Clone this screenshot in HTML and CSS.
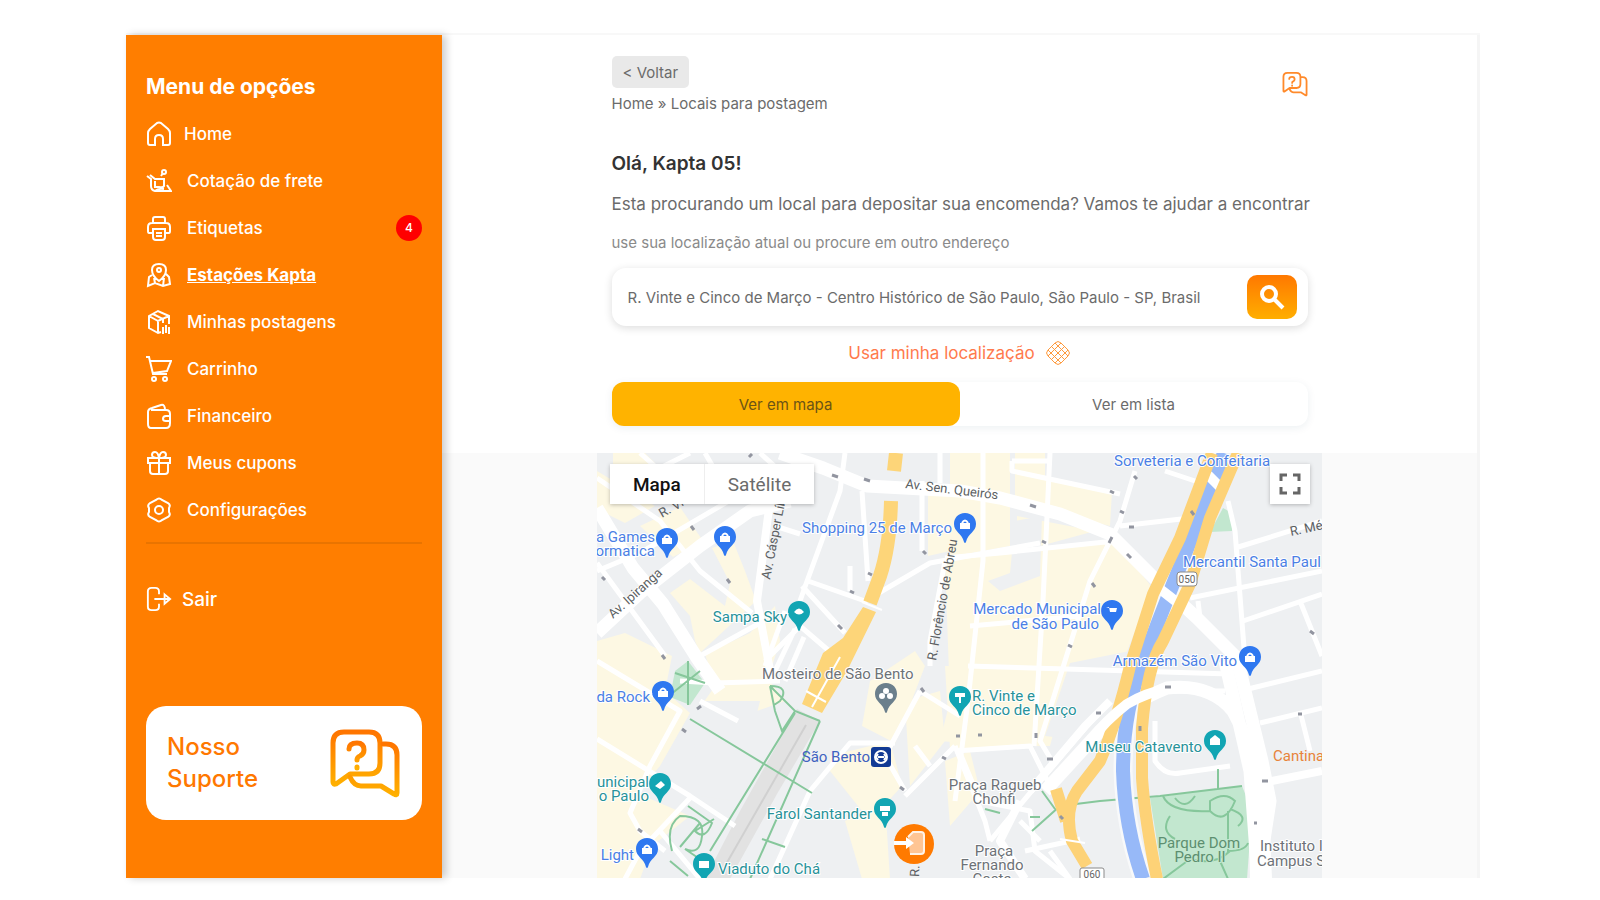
FILE: index.html
```html
<!DOCTYPE html>
<html lang="pt-BR">
<head>
    <meta charset="UTF-8">
    <meta name="viewport" content="width=device-width, initial-scale=1.0">
    <title>Kapta - Locais para postagem</title>
    <link rel="stylesheet" href="styles.css">
</head>
<body>
    <!-- shared shapes -->
    <svg class="defs" width="0" height="0" aria-hidden="true">
        <defs>
            <linearGradient id="orangeGradient" x1="0" y1="0" x2="0" y2="1">
                <stop offset="0" stop-color="#ff7500"/>
                <stop offset="1" stop-color="#ffb000"/>
            </linearGradient>
            <symbol id="support" viewBox="0 0 72 70">
                <g fill="none" stroke-width="5" stroke-linejoin="round" stroke-linecap="round">
                    <path d="M4 54V15Q4 4 15 4H40Q51 4 51 15V35Q51 46 40 46H21L7 56Q4 57 4 54Z"/>
                    <path d="M54 16H57Q68 16 68 27V65Q68 68 65 66L52 58H32Q25 58 21 49"/>
                    <path d="M20 21Q20 15 28 15Q35 15 35 22Q35 26 31 28Q28 29 28 32M28 39V40"/>
                </g>
            </symbol>
            <symbol id="pin" viewBox="0 0 24 32">
                <path d="M12 1C5 1 1 6 1 12C1 20 9 21 11 30Q12 32 13 30C15 21 23 20 23 12C23 6 19 1 12 1Z"/>
            </symbol>
        </defs>
    </svg>

    <div class="app">
        <aside class="sidebar">
            <h2>Menu de opções</h2>
            <nav class="menu">
                <a class="home" href="#">
                    <svg viewBox="0 0 26 26"><path d="M2 12Q2 10 4 8L11 2Q13 1 15 2L22 8Q24 10 24 12V22Q24 24 22 24H17V18Q17 14 13 14Q9 14 9 18V24H4Q2 24 2 22Z"/></svg>
                    Home
                </a>
                <a href="#">
                    <svg viewBox="0 0 26 26"><path d="M1 8L5 11V18Q5 22 9 23H25L21 17M4 7L9 11H18V18Q17 20 13 19H9V13M9 23Q12 20 18 21M15 8L17 5" /><circle cx="18" cy="4" r="2"/></svg>
                    Cotação de frete
                </a>
                <a href="#">
                    <svg viewBox="0 0 26 26"><path d="M7 8V4Q7 2 9 2H17Q19 2 19 4V8M7 18H3Q2 18 2 16V12Q2 8 6 8H20Q24 8 24 12V16Q24 18 23 18H19M7 14H19V22Q19 25 16 25H10Q7 25 7 22ZM10 18H16M10 21H16"/></svg>
                    Etiquetas
                    <span class="badge">4</span>
                </a>
                <a class="active" href="#">
                    <svg viewBox="0 0 26 26"><path d="M13 19Q6 14 6 8Q6 2 13 2Q20 2 20 8Q20 14 13 19ZM6 13L3 15L2 24L9 21L17 24L24 22L23 15L20 12M9 21L8 16M17 24L18 16"/><circle cx="13" cy="8" r="2"/></svg>
                    Estações Kapta
                </a>
                <a href="#">
                    <svg viewBox="0 0 26 26"><path d="M15 23L12 24L3 19V7L12 2L23 7V15M3 7L12 12L23 7M12 12V24M7 5L17 10V14M17 18V25M20 16V24M23 18V25"/></svg>
                    Minhas postagens
                </a>
                <a href="#">
                    <svg viewBox="0 0 26 26"><path d="M0 1H3L7 18H21M4 5H25L21 15L7 17"/><circle cx="8" cy="23" r="2"/><circle cx="19" cy="23" r="2"/></svg>
                    Carrinho
                </a>
                <a href="#">
                    <svg viewBox="0 0 26 26"><path d="M5 7H20Q24 7 24 11V20Q24 25 20 25H5Q2 25 2 21V9Q2 6 6 5L15 2Q19 1 19 7M24 13H20Q17 13 17 16Q17 18 20 18H24"/></svg>
                    Financeiro
                </a>
                <a href="#">
                    <svg viewBox="0 0 26 26"><path d="M2 8H24V13H2ZM4 13V21Q4 24 7 24H19Q22 24 22 21V13M13 8V24M13 8Q6 8 6 5Q6 2 9 2Q12 2 13 8Q14 2 17 2Q20 2 20 5Q20 8 13 8"/></svg>
                    Meus cupons
                </a>
                <a href="#">
                    <svg viewBox="0 0 26 26"><path d="M10 3Q13 0 16 3L22 6Q25 8 23 11V15Q25 18 22 20L16 23Q13 26 10 23L4 20Q1 18 3 15V11Q1 8 4 6Z"/><circle cx="13" cy="13" r="4"/></svg>
                    Configurações
                </a>
            </nav>
            <a class="logout" href="#">
                <svg viewBox="0 0 28 26"><path d="M14 8V5Q14 1 10 1H6Q2 1 2 5V21Q2 25 6 25H10Q14 25 14 21V18M9 13H25M20 8L26 13L20 18Z"/></svg>
                Sair
            </a>
            <a class="support-card" href="#">
                <span>Nosso<br>Suporte</span>
                <svg viewBox="0 0 72 70" stroke="url(#orangeGradient)"><use href="#support"/></svg>
            </a>
        </aside>

        <main class="main">
            <div class="content">
                <header class="top">
                    <div>
                        <button class="back" type="button">&lt; Voltar</button>
                        <p class="breadcrumb">Home » Locais para postagem</p>
                    </div>
                    <a class="help" href="#" aria-label="Suporte">
                        <svg viewBox="0 0 72 70" stroke="#ff8a2b"><use href="#support"/></svg>
                    </a>
                </header>

                <h1>Olá, Kapta 05!</h1>
                <p class="intro">Esta procurando um local para depositar sua encomenda? Vamos te ajudar a encontrar</p>
                <label class="hint" for="address">use sua localização atual ou procure em outro endereço</label>

                <form class="search">
                    <input type="text" id="address" name="address" value="R. Vinte e Cinco de Março - Centro Histórico de São Paulo, São Paulo - SP, Brasil">
                    <button type="button" aria-label="Buscar">
                        <svg viewBox="0 0 26 26"><circle cx="10" cy="10" r="7"/><path d="M15 15L24 24"/></svg>
                    </button>
                </form>

                <a class="locate" href="#">
                    Usar minha localização
                    <svg viewBox="0 0 26 26"><path d="M10 3Q13 0 16 3L23 10Q26 13 23 16L16 23Q13 26 10 23L3 16Q0 13 3 10ZM6 6L20 20M20 6L6 20M10 3L23 16M16 3L3 16M3 10L16 23M23 10L10 23"/></svg>
                </a>

                <div class="tabs">
                    <button class="selected" type="button">Ver em mapa</button>
                    <button type="button">Ver em lista</button>
                </div>
            </div>

            <section class="map-area">
                <div class="map">
                    <svg class="map-canvas" viewBox="597 452 725 426" preserveAspectRatio="xMidYMin slice">
                        <rect class="ground" x="500" y="400" width="1000" height="600"/>

                        <!-- commercial blocks -->
                        <g class="blocks">
                            <path d="M613 452H645L655 462L613 472ZM597 470L655 505L625 522L597 508Z"/>
                            <path d="M640 525L680 506L703 540L673 556Z"/>
                            <path d="M712 547L733 540L745 570L756 600L700 652L695 640L690 615L670 592L690 578L725 605L730 582Z"/>
                            <path d="M597 640L625 632L672 655L665 690L690 712L660 765L630 800L597 775Z"/>
                            <path d="M705 653L750 632L775 605L780 640L768 678L785 700L735 718L747 735L738 775L725 770L728 742L692 718L715 685Z"/>
                            <path d="M597 745L632 790L690 815L652 845L640 878H597Z"/>
                            <path d="M870 680L915 650L925 665L900 730L895 742L862 725ZM830 755L890 740L902 785L870 820L830 770ZM845 820L885 800L890 878H862Z"/>
                            <path d="M928 490L950 488V550L928 555ZM950 452H1010V545L950 556Z"/>
                            <path d="M1015 452H1045V478L1112 490L1110 525L1050 510L1015 495ZM1017 515L1095 530L1040 545L1017 545Z"/>
                            <path d="M945 560L1010 550L1115 540L1155 590L1135 630L1120 668H1070L1050 745L1000 745L940 740L950 700Z"/>
                            <path d="M945 665H1035L1028 745L950 748ZM945 760L970 750L980 790L950 825ZM905 700L940 690L945 740L910 785Z"/>
                        </g>
                        <g class="ground">
                            <path d="M1015 520L1042 515L1040 575L1000 590L988 580L1010 572ZM690 700L760 700L735 800L700 795Z"/>
                            <path d="M1070 662L1130 650L1090 740L1045 735Z"/>
                        </g>

                        <!-- parks -->
                        <g class="park">
                            <path d="M688 660L705 682L690 704L670 696L675 670Z"/>
                            <path d="M1223 507L1232 512V530L1210 531Z"/>
                            <path d="M1150 797L1242 785L1252 810L1247 878H1163Z"/>
                        </g>

                        <!-- rail yard -->
                        <path class="rail" d="M797 708L820 720L777 793L730 878H705L740 810Z"/>
                        <path class="rail-line" d="M806 724L725 865"/>

                        <!-- streets -->
                        <g class="street">
                            <path d="M597 477L660 520L700 570L752 612M640 452L658 468L690 452M597 570L640 552L780 470L760 452"/>
                            <path d="M597 562L665 655M705 452L720 478M845 452L840 490L806 583L800 600M862 490L868 580M808 580L865 600L930 562L1040 542"/>
                            <path d="M802 585L845 632M850 565V590M775 525L800 533M700 655L760 622M765 660L800 625L835 655"/>
                            <path d="M922 480V550M940 452V482M983 452V560L968 700L955 800M1050 452L1043 600L1034 745M1012 460H1050M1012 460V470L1120 493"/>
                            <path d="M1135 470L1120 520L1090 580L1065 660L1040 740L1052 760M1120 525L1190 517M1115 540L1000 552L945 557"/>
                            <path d="M1165 470L1225 490M1228 500L1235 530L1245 660M1235 547L1322 520M1190 597L1322 570M1200 617L1198 600M1243 620L1322 593M1300 600L1322 655"/>
                            <path d="M970 625L1080 615M968 665L1230 673M955 750L1030 745L1050 785M1130 690L1225 690M1240 690L1322 670M1260 722L1322 707M1300 710L1310 750"/>
                            <path d="M597 660L680 710L650 765L630 812L640 830L665 850M597 738L690 795L735 825M690 797L640 850L625 878M660 830L700 878"/>
                            <path d="M680 680L715 682L780 680M700 700L738 720M920 690L885 755L905 790M920 690L960 715M905 795L955 745M915 745L930 765"/>
                            <path d="M895 742H850L810 790L770 878M930 665V640L945 560M955 745L985 820L990 840M960 752L980 800L1030 810L1035 850L1070 878"/>
                            <path d="M1100 710L1040 780L990 840M1025 850L1080 838M1155 720V760Q1165 775 1180 772L1230 765M1050 850L1070 878M1040 840L1020 820"/>
                            <path d="M785 610L765 665M795 628L775 670M804 636L785 680"/>
                        </g>
                        <g class="avenue">
                            <path d="M597 632L640 592L700 545L750 510L790 500"/>
                            <path d="M597 507L633 567L663 603L697 657L720 690"/>
                            <path d="M780 452L823 467L867 485L960 490L1000 497L1060 513L1110 533L1157 580L1197 617L1237 657L1262 760L1270 800L1258 878"/>
                            <path d="M1045 790L1100 730Q1127 703 1167 687Q1210 682 1233 710Q1250 740 1257 790M1225 660L1250 770L1258 878"/>
                        </g>
                        <path class="junction" d="M1248 780H1268L1272 878H1250Z"/>
                        <path class="avenue-thin" d="M770 500L757 600L772 680M1262 782L1322 770M1030 790L1085 725L1110 700M1020 800L1000 840L1025 878"/>

                        <!-- park paths -->
                        <g class="trail">
                            <path d="M690 718L812 792M795 712L710 850M820 720L750 878M770 685L795 710L820 720M770 685L775 710L782 730L795 710M770 685Q790 685 780 700L774 704"/>
                            <path d="M688 660V704M675 672L705 682M670 694L700 670M762 838L785 846M672 850Q665 825 680 815Q705 815 702 835Q700 855 685 848L710 865M680 846L700 822M688 805L712 822Q705 840 695 830L714 818"/>
                            <path d="M670 860L688 875M1032 830L1060 805L1100 800L1160 795L1242 785M1218 768V788M1042 790L1055 808M985 808L1000 812M1030 816H1040"/>
                            <path d="M1163 795Q1170 812 1210 810M1175 797Q1185 810 1195 795M1170 815Q1160 830 1175 838M1210 800Q1225 790 1235 800Q1225 825 1210 810ZM1228 810V850Q1245 850 1248 842M1230 808Q1250 815 1238 825M1163 878L1190 858Q1215 865 1230 850M1220 860L1228 878"/>
                        </g>

                        <!-- river and main roads -->
                        <path class="river-edge" d="M1224 452L1197 523L1173 583L1143 660Q1123 710 1123 770Q1125 827 1143 878"/>
                        <path class="river" d="M1224 452L1197 523L1173 583L1143 660Q1123 710 1123 770Q1125 827 1143 878"/>
                        <path class="crossing" d="M1160 588L1178 602M1208 474L1222 488"/>
                        <g class="highway">
                            <path d="M1212 452L1180 537L1153 593L1130 665Q1117 720 1100 760L1077 790Q1064 810 1072 840L1087 865M1056 788L1066 820"/>
                            <path d="M1238 452L1210 517L1190 583L1163 640Q1147 665 1142 727V777Q1145 820 1157 878"/>
                        </g>
                        <path class="expressway" d="M896 452L894 470M891 500Q890 545 880 575L870 602"/>
                        <path class="expressway-end" d="M863 606L876 611L847 670L822 712L802 703L823 652L843 637Z"/>
                        <path class="lane" d="M840 656L812 706M862 601L882 609"/>
                        <path class="lane" d="M806 690L826 701M1060 838L1085 842"/>
                        <path class="arc" d="M1092 738Q1105 720 1127 703Q1145 692 1170 687"/>

                        <!-- one-way marks -->
                        <g class="mark">
                            <path d="M749 456l3-3M832 474l6 2M864 478l6 2M691 525l3 4M727 578l3 4M602 576l3 3M662 654l3 4M838 624l4 4M850 590l4 2M868 572l4 2M923 550l3 3M1030 504l6 2M1127 553l4 4M1109 542l3-6M1042 540l4 2M1120 510l4 2M1134 475l3 3M1110 490l4 2M1092 582l3 4M1068 644l4 2M1129 526h5M1191 510l3 4M1310 630l4 3M697 708l4-3M682 728l4 3M638 828l4 3M900 786l4 3M942 756l4 2M921 687l3 4M956 735h4M978 734h4M1036 732v5M1096 712h5M1047 758h6M1165 686h6M1140 725v5M1298 713h4M1262 780h6M1060 815l3 3M1254 822h3"/>
                        </g>

                        <g class="shield">
                            <rect x="1177" y="571" width="20" height="14" rx="3"/>
                            <rect x="1080" y="867" width="24" height="14" rx="2"/>
                            <text x="1187" y="582">050</text>
                            <text x="1092" y="877">060</text>
                        </g>

                        <!-- street names -->
                        <g class="road-name">
                            <text transform="translate(613 618) rotate(-42)">Av. Ipiranga</text>
                            <text transform="translate(770 579) rotate(-79)">Av. Cásper Líbero</text>
                            <text transform="translate(936 660) rotate(-80)">R. Florêncio de Abreu</text>
                            <text transform="translate(905 487) rotate(7)">Av. Sen. Queirós</text>
                            <text transform="translate(662 517) rotate(-30)">R. Vitória</text>
                            <text transform="translate(1291 535) rotate(-12)">R. Mé</text>
                            <text transform="translate(919 876) rotate(-88)">R.</text>
                        </g>

                        <!-- places -->
                        <g class="place shop">
                            <use href="#pin" x="655" y="526" width="24" height="32"/>
                            <use href="#pin" x="713" y="524" width="24" height="32"/>
                            <use href="#pin" x="953" y="511" width="24" height="32"/>
                            <use href="#pin" x="1100" y="598" width="24" height="32"/>
                            <use href="#pin" x="1238" y="644" width="24" height="32"/>
                            <use href="#pin" x="651" y="679" width="24" height="32"/>
                            <use href="#pin" x="635" y="836" width="24" height="32"/>
                            <text x="655" y="541" text-anchor="end">a Games</text>
                            <text x="655" y="555" text-anchor="end">ormatica</text>
                            <text x="952" y="532" text-anchor="end">Shopping 25 de Março</text>
                            <text x="1114" y="465">Sorveteria e Confeitaria</text>
                            <text x="1183" y="566">Mercantil Santa Paul</text>
                            <text x="1101" y="613" text-anchor="end">Mercado Municipal</text>
                            <text x="1099" y="628" text-anchor="end">de São Paulo</text>
                            <text x="1237" y="665" text-anchor="end">Armazém São Vito</text>
                            <text x="650" y="701" text-anchor="end">da Rock</text>
                            <text x="634" y="859" text-anchor="end">Light</text>
                        </g>
                        <g class="place sight">
                            <use href="#pin" x="787" y="599" width="24" height="32"/>
                            <use href="#pin" x="948" y="684" width="24" height="32"/>
                            <use href="#pin" x="648" y="771" width="24" height="32"/>
                            <use href="#pin" x="873" y="796" width="24" height="32"/>
                            <use href="#pin" x="1203" y="728" width="24" height="32"/>
                            <use href="#pin" x="692" y="851" width="24" height="32"/>
                            <text x="787" y="621" text-anchor="end">Sampa Sky</text>
                            <text x="972" y="700">R. Vinte e</text>
                            <text x="972" y="714">Cinco de Março</text>
                            <text x="649" y="786" text-anchor="end">unicipal</text>
                            <text x="649" y="800" text-anchor="end">o Paulo</text>
                            <text x="872" y="818" text-anchor="end">Farol Santander</text>
                            <text x="1202" y="751" text-anchor="end">Museu Catavento</text>
                            <text x="718" y="873">Viaduto do Chá</text>
                        </g>
                        <g class="place area">
                            <use href="#pin" x="874" y="681" width="24" height="32"/>
                            <text x="762" y="678">Mosteiro de São Bento</text>
                            <text x="995" y="789" text-anchor="middle">Praça Ragueb</text>
                            <text x="994" y="803" text-anchor="middle">Chohfi</text>
                            <text x="994" y="855" text-anchor="middle">Praça</text>
                            <text x="992" y="869" text-anchor="middle">Fernando</text>
                            <text x="992" y="883" text-anchor="middle">Costa</text>
                            <text x="1260" y="850">Instituto I</text>
                            <text x="1257" y="865">Campus S</text>
                        </g>
                        <g class="place green">
                            <text x="1199" y="847" text-anchor="middle">Parque Dom</text>
                            <text x="1200" y="861" text-anchor="middle">Pedro II</text>
                        </g>
                        <text class="place food" x="1273" y="760">Cantina</text>

                        <!-- glyphs inside the pins -->
                        <g class="pin-icon">
                            <path d="M662 537h10v6h-10zM720 535h10v6h-10zM960 522h10v6h-10zM1245 655h10v6h-10zM658 690h10v6h-10zM642 847h10v6h-10z"/>
                            <path d="M1106 606h3l1 5h6l1-4h-8M655 785l6-5l4 4l-5 4zM699 860h10v7h-10zM794 611q5-7 10 0q-5 5-10 0M955 692h10v4h-4v6h-2v-6h-4zM880 805h10v5h-10zM882 811h6v4h-6zM1210 738l5-4l5 4v6h-10z"/>
                            <circle cx="886" cy="690" r="3"/><circle cx="882" cy="695" r="3"/><circle cx="890" cy="695" r="3"/>
                        </g>
                        <g class="pin-hole">
                            <path d="M664 537q3-5 6 0M722 535q3-5 6 0M962 522q3-5 6 0M1247 655q3-5 6 0M660 690q3-5 6 0M644 847q3-5 6 0"/>
                        </g>
                        <text class="place metro" x="870" y="761" text-anchor="end">São Bento</text>
                        <rect class="metro-box" x="871" y="746" width="20" height="20" rx="3"/>
                        <circle class="metro-ring" cx="881" cy="756" r="6"/>
                        <path class="metro-ring" d="M878 753L876 756L878 759M884 753L886 756L884 759M878 756H884"/>

                        <!-- kapta station -->
                        <circle class="station" cx="914" cy="843" r="20"/>
                        <path class="station-box" d="M908 836L913 831H921Q924 831 924 834V850Q924 853 921 853H910"/>
                        <path class="station-mark" d="M894 844H906V848L914 842L906 836V840H894"/>
                    </svg>
                    <div class="map-type">
                        <button class="selected" type="button">Mapa</button>
                        <button type="button">Satélite</button>
                    </div>
                    <button class="fullscreen" type="button" aria-label="Tela cheia">
                        <svg viewBox="0 0 22 22"><path d="M2 8V2H8M14 2H20V8M20 14V20H14M8 20H2V14"/></svg>
                    </button>
                </div>
            </section>
        </main>
    </div>
</body>
</html>
```
FILE: styles.css
```css
* {
    box-sizing: border-box;
}

body {
    margin: 0;
    padding: 35px 120px 22px 126px;
    min-height: 100vh;
    display: flex;
    background: white;
    color: #6b6b6b;
    font-family: Inter, "Liberation Sans", sans-serif;
}

a {
    color: inherit;
    text-decoration: none;
}

button {
    padding: 0;
    border: none;
    background: none;
    color: inherit;
    font-family: inherit;
    cursor: pointer;
}

h1, h2, p {
    margin: 0;
}

.defs {
    position: absolute;
}

.app {
    flex: 1;
    display: flex;
    border-right: 3px solid #f5f5f5;
    box-shadow: 0 -2px 0 #f8f8f8;
}

/* sidebar */

.sidebar {
    flex: 0 0 316px;
    display: flex;
    flex-direction: column;
    padding: 36px 20px 58px;
    background: #ff7e00;
    color: white;
    box-shadow: 4px 0 8px rgba(0, 0, 0, 0.2);
    z-index: 1;
}

.sidebar h2 {
    font-size: 21px;
    line-height: 32px;
    font-weight: 700;
    padding-bottom: 7px;
}

.menu {
    display: flex;
    flex-direction: column;
    padding-bottom: 9px;
    border-bottom: 2px solid #e97400;
}

.menu a {
    display: flex;
    align-items: center;
    gap: 15px;
    height: 47px;
    font-size: 17px;
    font-weight: 500;
}

.menu .home {
    gap: 12px;
}

.menu .active {
    font-weight: 700;
    text-decoration: underline;
}

.menu svg,
.logout svg {
    width: 26px;
    height: 26px;
    fill: none;
    stroke: white;
    stroke-width: 2;
}

.badge {
    width: 26px;
    height: 26px;
    margin-left: auto;
    border-radius: 50%;
    background: #f00;
    font-size: 12px;
    line-height: 26px;
    text-align: center;
}

.logout {
    display: flex;
    align-items: center;
    gap: 10px;
    margin-top: 42px;
    font-size: 19px;
    font-weight: 500;
}

.support-card {
    display: flex;
    align-items: center;
    justify-content: space-between;
    margin-top: auto;
    height: 114px;
    padding: 0 21px;
    border-radius: 20px;
    background: white;
    color: #ff7800;
    font-size: 24px;
    line-height: 32px;
    font-weight: 500;
}

.support-card svg {
    width: 72px;
    height: 70px;
}

/* content */

.main {
    flex: 1;
    min-width: 0;
    display: flex;
    flex-direction: column;
}

.content {
    display: flex;
    flex-direction: column;
    width: 100%;
    max-width: 696px;
    margin: 0 auto;
    padding: 21px 0 27px;
}

.top {
    display: flex;
    justify-content: space-between;
}

.back {
    height: 32px;
    padding: 0 11px;
    border-radius: 5px;
    background: #e9e9e9;
    font-size: 15px;
}

.breadcrumb {
    padding-top: 6px;
    font-size: 15px;
    line-height: 20px;
}

.help svg {
    width: 26px;
    height: 26px;
    margin-top: 15px;
}

.content h1 {
    padding-top: 38px;
    color: #333;
    font-size: 19px;
    line-height: 24px;
    font-weight: 600;
}

.intro {
    padding-top: 16px;
    font-size: 17px;
    line-height: 24px;
    white-space: nowrap;
}

.hint {
    padding-top: 17px;
    color: #8a8a8a;
    font-size: 15px;
    line-height: 20px;
}

.search {
    display: flex;
    align-items: center;
    height: 58px;
    margin-top: 15px;
    padding: 0 11px 0 16px;
    border-radius: 14px;
    background: white;
    box-shadow: 0 2px 8px rgba(0, 0, 0, 0.14);
}

.search input {
    flex: 1;
    min-width: 0;
    padding: 0;
    border: none;
    outline: none;
    background: none;
    color: #6b6b6b;
    font-family: inherit;
    font-size: 15px;
}

.search button {
    display: flex;
    align-items: center;
    justify-content: center;
    width: 50px;
    height: 44px;
    border-radius: 10px;
    background: linear-gradient(#ff7800, #ffae00);
}

.search svg {
    width: 26px;
    height: 26px;
    fill: none;
    stroke: white;
    stroke-width: 4;
}

.locate {
    display: flex;
    align-items: center;
    justify-content: center;
    gap: 10px;
    height: 26px;
    margin-top: 14px;
    color: #ff7a4d;
    font-size: 17px;
}

.locate svg {
    width: 26px;
    height: 26px;
    fill: none;
    stroke: #ff9a3c;
    stroke-width: 1;
}

.tabs {
    display: flex;
    margin-top: 16px;
    border-radius: 12px;
    box-shadow: 0 2px 8px rgba(0, 60, 90, 0.08);
}

.tabs button {
    flex: 1;
    height: 44px;
    border-radius: 12px;
    font-size: 15px;
}

.tabs .selected {
    background: #ffb300;
    color: #6b5316;
}

/* map */

.map-area {
    flex: 1;
    display: flex;
    justify-content: center;
    background: #fafafa;
}

.map {
    position: relative;
    width: 100%;
    max-width: 725px;
    min-height: 300px;
    overflow: hidden;
    font-family: Roboto, "Liberation Sans", sans-serif;
}

.map-canvas {
    position: absolute;
    width: 100%;
    height: 100%;
}

.map-type {
    position: absolute;
    top: 11px;
    left: 13px;
    display: flex;
    background: white;
    box-shadow: 0 1px 4px rgba(0, 0, 0, 0.25);
}

.map-type button {
    height: 40px;
    padding: 0 23px;
    font-size: 19px;
}

.map-type .selected {
    border-right: 1px solid #eee;
    color: #111;
    font-weight: 500;
}

.fullscreen {
    position: absolute;
    top: 11px;
    right: 12px;
    display: flex;
    align-items: center;
    justify-content: center;
    width: 40px;
    height: 40px;
    background: white;
    box-shadow: 0 1px 4px rgba(0, 0, 0, 0.25);
}

.fullscreen svg {
    width: 22px;
    height: 22px;
    fill: none;
    stroke: #666;
    stroke-width: 3;
}

.ground {
    fill: #eef0f2;
}

.blocks {
    fill: #fdf8e3;
}

.park {
    fill: #c2e7cf;
}

.rail {
    fill: #e2e2e2;
}

.rail-line {
    stroke: #d0d0d0;
    stroke-width: 2;
}

.street,
.avenue,
.avenue-thin,
.arc,
.crossing,
.lane {
    fill: none;
    stroke: white;
    stroke-width: 5;
    stroke-linejoin: round;
}

.avenue {
    stroke-width: 13;
}

.avenue-thin {
    stroke-width: 8;
}

.arc,
.crossing {
    stroke-width: 10;
}

.lane {
    stroke-width: 2;
}

.junction {
    fill: white;
}

.trail {
    fill: none;
    stroke: #86c79b;
    stroke-width: 2;
}

.river,
.river-edge,
.highway,
.expressway {
    fill: none;
    stroke-linejoin: round;
}

.river-edge {
    stroke: #f8f9fa;
    stroke-width: 19;
}

.river {
    stroke: #97b9f8;
    stroke-width: 14;
}

.highway {
    stroke: #fdd277;
    stroke-width: 12;
}

.expressway {
    stroke: #fdd579;
    stroke-width: 14;
}

.expressway-end {
    fill: #fdd579;
}

.mark {
    fill: none;
    stroke: #9295a0;
    stroke-width: 3;
}

.shield rect {
    fill: white;
    stroke: #8a8a8a;
}

.shield text {
    fill: #666;
    font-size: 10px;
    text-anchor: middle;
}

.road-name {
    fill: #5c5f63;
    font-size: 13px;
}

.place {
    font-size: 15px;
}

.place text {
    stroke: white;
    stroke-width: 2px;
    paint-order: stroke;
}

.shop {
    fill: #4b7fe5;
}

.shop use {
    fill: #2f78f0;
}

.sight {
    fill: #279299;
}

.sight use {
    fill: #12a5b3;
}

.area {
    fill: #6d7277;
}

.area use {
    fill: #6b7f8c;
}

.green {
    fill: #5d8f70;
}

.green text {
    stroke: #c2e7cf;
}

.food {
    fill: #e8833a;
}

.metro {
    fill: #3f62c0;
}

.metro-box {
    fill: #123a94;
}

.metro-ring {
    fill: none;
    stroke: white;
    stroke-width: 2;
}

.pin-icon {
    fill: white;
}

.pin-hole {
    fill: none;
    stroke: white;
    stroke-width: 2;
}

.station {
    fill: #ff7a00;
}

.station-mark {
    fill: white;
}

.station-box {
    fill: #ffc593;
    stroke: #fff3e6;
    stroke-width: 2;
}
```
